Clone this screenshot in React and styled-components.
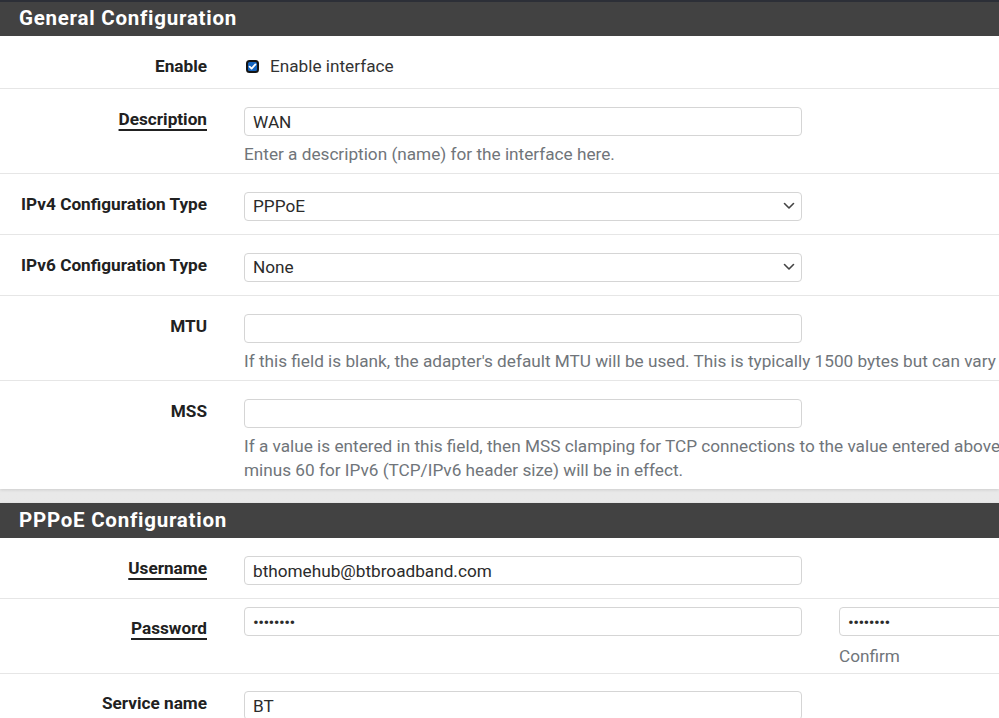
import React from "react";
import styled, { createGlobalStyle } from "styled-components";

const Global = createGlobalStyle`
  html, body { margin: 0; padding: 0; background: #ffffff; overflow: hidden; }
  body { font-family: Roboto, "Noto Sans", "Liberation Sans", sans-serif; color: #212121; }
  * { box-sizing: border-box; }
`;

const Page = styled.div`
  width: 999px;
  height: 718px;
  overflow: hidden;
  background: linear-gradient(#f4f4f4, #e4e4e4);
`;

const Panel = styled.section`
  background: #ffffff;
  box-shadow: 0 1px 3px rgba(0, 0, 0, 0.12);
  margin-bottom: ${(p) => p.$gap || 0}px;
`;

const Heading = styled.h2`
  margin: 0;
  height: ${(p) => (p.$top ? 36 : 35)}px;
  background: #424242;
  border-top: ${(p) => (p.$top ? "2px solid #2c2f37" : "none")};
  color: #ffffff;
  font-size: 20.5px;
  font-weight: 700;
  letter-spacing: 0.75px;
  line-height: ${(p) => (p.$top ? 32 : 34)}px;
  padding-left: 19px;
  white-space: nowrap;
`;

const Row = styled.div`
  display: grid;
  grid-template-columns: 207px 558px 558px;
  column-gap: 37px;
  align-items: start;
  padding: ${(p) => p.$pt ?? 18}px 0 ${(p) => p.$pb ?? 13}px;
  border-top: ${(p) => (p.$first ? "none" : "1px solid #e6e6e6")};
`;

const Label = styled.div`
  text-align: right;
  font-size: 17.2px;
  font-weight: 700;
  line-height: 24px;
  color: #212121;
  padding-top: ${(p) => p.$offset || 0}px;
  white-space: nowrap;
`;

const LinkLabel = styled.span`
  text-decoration: underline;
  text-decoration-thickness: 2px;
  text-underline-offset: 4px;
  cursor: pointer;
`;

const Field = styled.div`
  display: flex;
  flex-direction: column;
  min-width: 0;
`;

const Input = styled.input`
  width: 558px;
  height: 29px;
  border: 1px solid #d5d5d5;
  border-radius: 4px;
  padding: 0 8px;
  font-family: inherit;
  font-size: 17.2px;
  color: #2b2b2b;
  background: #ffffff;
  outline: none;
  letter-spacing: ${(p) => (p.$dots ? "-0.6px" : "normal")};
`;

const SelectBox = styled.div`
  position: relative;
  width: 558px;
  height: 29px;
  border: 1px solid #d5d5d5;
  border-radius: 4px;
  padding: 0 8px;
  font-size: 17.2px;
  line-height: 27px;
  color: #2b2b2b;
  background: #ffffff;
`;

const Chevron = styled.svg`
  position: absolute;
  right: 6px;
  top: 9px;
`;

const Help = styled.div`
  margin: ${(p) => p.$mt ?? 6}px 0 ${(p) => -(p.$mt ?? 6)}px;
  font-size: 17.2px;
  line-height: 24px;
  color: #70757a;
  white-space: nowrap;
`;

const CheckLine = styled.label`
  display: flex;
  align-items: center;
  gap: 11px;
  font-size: 17.2px;
  line-height: 24px;
  color: #333333;
  white-space: nowrap;
  padding-left: 2px;
`;

function Check() {
  return (
    <svg width="13" height="13" viewBox="0 0 13 13">
      <rect x="1" y="1" width="11" height="11" rx="2.5" fill="#1565c0" stroke="#141414" strokeWidth="2" />
      <path d="M3.6 6.6 L5.6 8.6 L9.4 4.4" fill="none" stroke="#ffffff" strokeWidth="1.8" strokeLinecap="round" strokeLinejoin="round" />
    </svg>
  );
}

function Select({ value }) {
  return (
    <SelectBox>
      {value}
      <Chevron width="12" height="8" viewBox="0 0 12 8">
        <path d="M1.5 1.5 L6 6 L10.5 1.5" fill="none" stroke="#444" strokeWidth="1.6" strokeLinecap="round" strokeLinejoin="round" />
      </Chevron>
    </SelectBox>
  );
}

export default function App() {
  return (
    <Page>
      <Global />
      <Panel $gap={14}>
        <Heading $top>General Configuration</Heading>
        <Row $first $pb={10}>
          <Label>Enable</Label>
          <CheckLine>
            <Check />
            Enable interface
          </CheckLine>
        </Row>
        <Row>
          <Label>
            <LinkLabel>Description</LinkLabel>
          </Label>
          <Field>
            <Input readOnly value="WAN" />
            <Help>Enter a description (name) for the interface here.</Help>
          </Field>
        </Row>
        <Row>
          <Label>IPv4 Configuration Type</Label>
          <Select value="PPPoE" />
        </Row>
        <Row>
          <Label>IPv6 Configuration Type</Label>
          <Select value="None" />
        </Row>
        <Row>
          <Label>MTU</Label>
          <Field>
            <Input readOnly value="" />
            <Help>
              If this field is blank, the adapter's default MTU will be used. This is typically 1500 bytes but can vary
            </Help>
          </Field>
        </Row>
        <Row>
          <Label>MSS</Label>
          <Field>
            <Input readOnly value="" />
            <Help>
              If a value is entered in this field, then MSS clamping for TCP connections to the value entered above
              <br />
              minus 60 for IPv6 (TCP/IPv6 header size) will be in effect.
            </Help>
          </Field>
        </Row>
      </Panel>
      <Panel>
        <Heading>PPPoE Configuration</Heading>
        <Row $first>
          <Label>
            <LinkLabel>Username</LinkLabel>
          </Label>
          <Input readOnly value="bthomehub@btbroadband.com" />
        </Row>
        <Row $pt={8}>
          <Label $offset={9}>
            <LinkLabel>Password</LinkLabel>
          </Label>
          <Input readOnly $dots value="••••••••" />
          <Field>
            <Input readOnly $dots value="••••••••" />
            <Help $mt={8}>Confirm</Help>
          </Field>
        </Row>
        <Row $pt={17}>
          <Label>Service name</Label>
          <Input readOnly value="BT" />
        </Row>
      </Panel>
    </Page>
  );
}
